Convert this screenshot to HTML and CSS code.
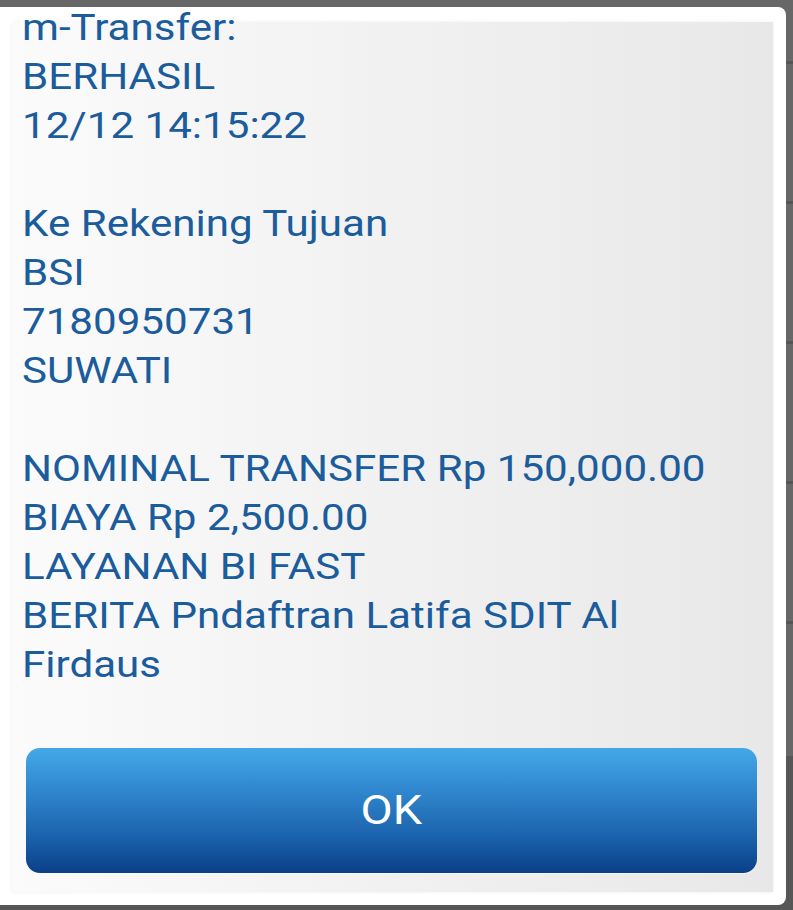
FILE: index.html
```html
<!DOCTYPE html>
<html>
<head>
<meta charset="utf-8">
<link rel="stylesheet" href="styles.css">
</head>
<body>
<div class="screen">
  <div class="dialog">
    <div class="panel">
      <div class="message">
        <div class="line">m-Transfer:</div>
        <div class="line">BERHASIL</div>
        <div class="line">12/12 14:15:22</div>
        <div class="line blank">&nbsp;</div>
        <div class="line">Ke Rekening Tujuan</div>
        <div class="line">BSI</div>
        <div class="line">7180950731</div>
        <div class="line">SUWATI</div>
        <div class="line blank">&nbsp;</div>
        <div class="line">NOMINAL TRANSFER Rp 150,000.00</div>
        <div class="line">BIAYA Rp 2,500.00</div>
        <div class="line">LAYANAN BI FAST</div>
        <div class="line">BERITA Pndaftran Latifa SDIT Al</div>
        <div class="line">Firdaus</div>
      </div>
      <button class="ok"><span class="ok-label">OK</span></button>
    </div>
  </div>
</div>
</body>
</html>
```

FILE: styles.css
```css
html, body {
  margin: 0;
  padding: 0;
  background: #5d5d5d;
}
.screen {
  width: 793px;
  height: 910px;
  padding: 7px 7px 5px 0;
  box-sizing: border-box;
  background:
    linear-gradient(180deg, transparent 0, transparent 756px, #565656 756px, #565656 100%),
    repeating-linear-gradient(180deg, #676767 0, #676767 61px, #555555 61px, #555555 64px, #676767 64px, #676767 140px);
  overflow: hidden;
}
.dialog {
  height: 898px;
  background: #ffffff;
  border-radius: 0 8px 8px 0;
  padding: 15px 13px 13px 12px;
  box-sizing: border-box;
}
.panel {
  height: 100%;
  background: linear-gradient(90deg, #fbfbfb 0%, #f1f1f1 50%, #e8e8e8 100%);
  box-shadow: 0 0 3px rgba(0,0,0,0.08);
  display: flex;
  flex-direction: column;
  padding: 0 16px 19px 14px;
  box-sizing: border-box;
}
.message {
  flex: 1;
  margin-top: -18px;
  margin-left: -14px;
  padding-left: 10px;
  font-family: Roboto, "Noto Sans", sans-serif;
  font-size: 36px;
  line-height: 49px;
  color: #1b5c9c;
}
.line {
  white-space: nowrap;
  transform: scaleX(1.17);
  transform-origin: left center;
}
.ok {
  height: 125px;
  width: 100%;
  border: none;
  border-radius: 14px;
  background: linear-gradient(180deg, #43a8e8 0%, #2f86cc 35%, #1b63ad 70%, #0b3f88 100%);
  color: #ffffff;
  font-family: Roboto, "Noto Sans", sans-serif;
  font-size: 40px;
  padding: 0;
  box-shadow: 0 1px 0 rgba(255,255,255,0.6);
}
.ok-label {
  display: inline-block;
  transform: scaleX(1.17);
}
```
